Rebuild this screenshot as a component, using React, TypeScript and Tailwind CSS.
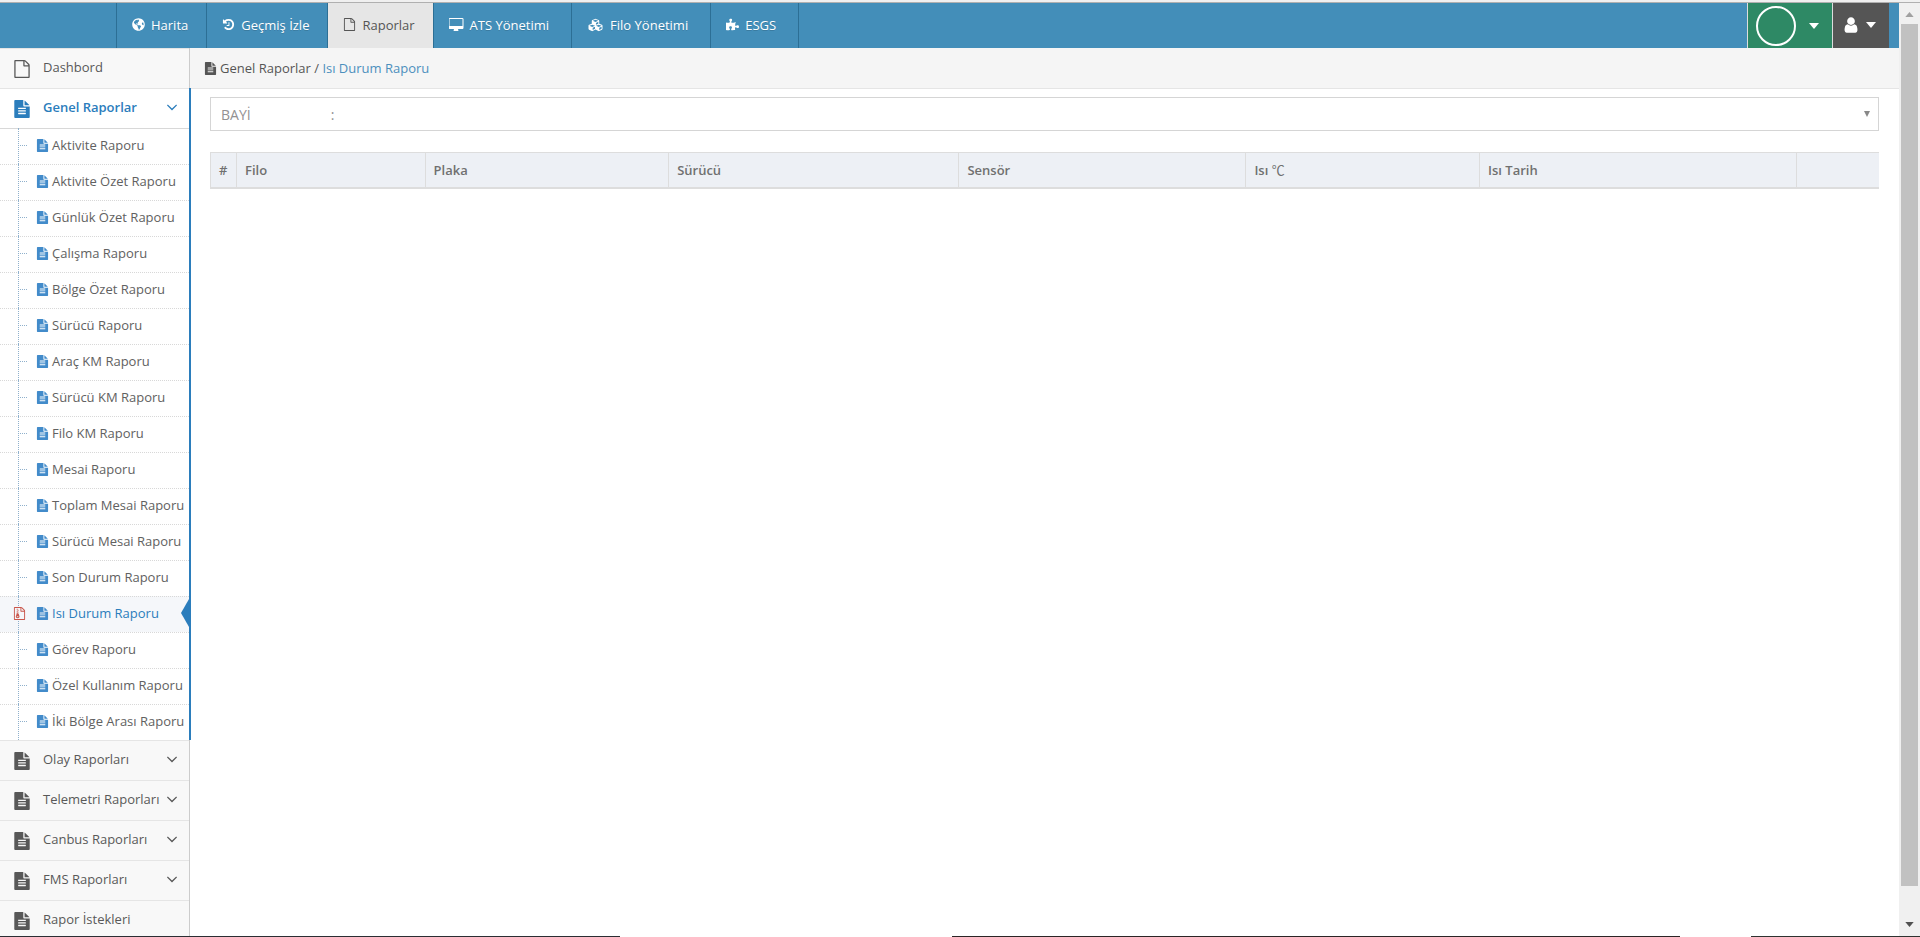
import { FaCubes, FaGlobeAmericas, FaPuzzlePiece } from "react-icons/fa";
import clsx from "clsx";
import type { ReactNode } from "react";

type IconProps = { className?: string };

const Glyph = ({ d, className, wide }: IconProps & { d: string; wide?: boolean }) => (
  <svg viewBox={wide ? "0 0 1920 1792" : "0 0 1792 1792"} className={clsx("shrink-0 fill-current", className)} aria-hidden="true">
    <path d={d} />
  </svg>
);

const FileText = ({ className }: IconProps) => (
  <Glyph
    className={className}
    d="M1596 476q14 14 28 36h-472v-472q22 14 36 28zm-476 164h544v1056q0 40-28 68t-68 28h-1344q-40 0-68-28t-28-68v-1600q0-40 28-68t68-28h800v544q0 40 28 68t68 28zm160 736v-64q0-14-9-23t-23-9h-704q-14 0-23 9t-9 23v64q0 14 9 23t23 9h704q14 0 23-9t9-23zm0-256v-64q0-14-9-23t-23-9h-704q-14 0-23 9t-9 23v64q0 14 9 23t23 9h704q14 0 23-9t9-23zm0-256v-64q0-14-9-23t-23-9h-704q-14 0-23 9t-9 23v64q0 14 9 23t23 9h704q14 0 23-9t9-23z"
  />
);

const FileOutline = ({ className }: IconProps) => (
  <Glyph
    className={className}
    d="M1596 380q28 28 48 76t20 88v1152q0 40-28 68t-68 28h-1344q-40 0-68-28t-28-68v-1600q0-40 28-68t68-28h896q40 0 88 20t76 48zm-444-244v376h376q-10-29-22-41l-313-313q-12-12-41-22zm384 1528v-1024h-416q-40 0-68-28t-28-68v-416h-768v1536h1280z"
  />
);

const FileArchive = ({ className }: IconProps) => (
  <Glyph
    className={className}
    d="M1596 380q28 28 48 76t20 88v1152q0 40-28 68t-68 28h-1344q-40 0-68-28t-28-68v-1600q0-40 28-68t68-28h896q40 0 88 20t76 48zm-444-244v376h376q-10-29-22-41l-313-313q-12-12-41-22zm384 1528v-1024h-416q-40 0-68-28t-28-68v-416h-768v1536h1280zM640 384v-128h-128v128h128zm128 128v-128h-128v128h128zm-128 128v-128h-128v128h128zm128 128v-128h-128v128h128zM781 943l107 349q8 27 8 52 0 83-72.5 137.5t-183.5 54.5-183.5-54.5-72.5-137.5q0-25 8-52 21-63 120-396v-128h128v128h79q22 0 39 13t23 34zm-141 465q53 0 90.5-19t37.5-45-37.5-45-90.5-19-90.5 19-37.5 45 37.5 45 90.5 19z"
  />
);

const History = ({ className }: IconProps) => (
  <Glyph
    className={className}
    d="M1664 896q0 156-61 298t-164 245-245 164-298 61q-172 0-327-72.5t-264-204.5q-7-10-6.5-22.5t8.5-20.5l137-138q10-9 25-9 16 2 23 12 73 95 179 147t225 52q104 0 198.5-40.5t163.5-109.5 109.5-163.5 40.5-198.5-40.5-198.5-109.5-163.5-163.5-109.5-198.5-40.5q-98 0-188 35.5t-160 101.5l137 138q31 30 14 69-17 40-59 40h-448q-26 0-45-19t-19-45v-448q0-42 40-59 39-17 69 14l130 129q107-101 244.5-156.5t284.5-55.5q156 0 298 61t245 164 164 245 61 298zm-640-288v448q0 14-9 23t-23 9h-320q-14 0-23-9t-9-23v-64q0-14 9-23t23-9h224v-352q0-14 9-23t23-9h64q14 0 23 9t9 23z"
  />
);

const Desktop = ({ className }: IconProps) => (
  <Glyph
    wide
    className={className}
    d="M1728 992v-832q0-13-9.5-22.5t-22.5-9.5h-1600q-13 0-22.5 9.5t-9.5 22.5v832q0 13 9.5 22.5t22.5 9.5h1600q13 0 22.5-9.5t9.5-22.5zm128-832v1088q0 66-47 113t-113 47h-544q0 37 16 77.5t32 71 16 43.5q0 26-19 45t-45 19h-512q-26 0-45-19t-19-45q0-14 16-44t32-70 16-78h-544q-66 0-113-47t-47-113v-1088q0-66 47-113t113-47h1600q66 0 113 47t47 113z"
  />
);

const User = ({ className }: IconProps) => (
  <Glyph
    className={className}
    d="M1536 1399q0 109-62.5 187t-150.5 78h-854q-88 0-150.5-78t-62.5-187q0-85 8.5-160.5t31.5-152 58.5-131 94-89 134.5-34.5q131 128 313 128t313-128q76 0 134.5 34.5t94 89 58.5 131 31.5 152 8.5 160.5zm-256-887q0 159-112.5 271.5t-271.5 112.5-271.5-112.5-112.5-271.5 112.5-271.5 271.5-112.5 271.5 112.5 112.5 271.5z"
  />
);

const AngleDown = ({ className }: IconProps) => (
  <Glyph
    className={className}
    d="M1395 736q0 13-10 23l-466 466q-10 10-23 10t-23-10l-466-466q-10-10-10-23t10-23l50-50q10-10 23-10t23 10l393 393 393-393q10-10 23-10t23 10l50 50q10 10 10 23z"
  />
);

const Caret = ({ className }: IconProps) => (
  <svg viewBox="0 0 10 6" className={clsx("shrink-0 fill-current", className)} aria-hidden="true">
    <path d="M0 0h10L5 6z" />
  </svg>
);

const navItems: { label: string; icon: ReactNode; active?: boolean; wide?: boolean }[] = [
  { label: "Harita", icon: <FaGlobeAmericas className="size-[13px]" /> },
  { label: "Geçmiş İzle", icon: <History className="size-[13px]" /> },
  { label: "Raporlar", icon: <FileOutline className="size-[13px]" />, active: true },
  { label: "ATS Yönetimi", icon: <Desktop className="h-[14px] w-[15px]" />, wide: true },
  { label: "Filo Yönetimi", icon: <FaCubes className="h-[14px] w-[17px]" />, wide: true },
  { label: "ESGS", icon: <FaPuzzlePiece className="size-[13px]" />, wide: true },
];

const reports = [
  "Aktivite Raporu",
  "Aktivite Özet Raporu",
  "Günlük Özet Raporu",
  "Çalışma Raporu",
  "Bölge Özet Raporu",
  "Sürücü Raporu",
  "Araç KM Raporu",
  "Sürücü KM Raporu",
  "Filo KM Raporu",
  "Mesai Raporu",
  "Toplam Mesai Raporu",
  "Sürücü Mesai Raporu",
  "Son Durum Raporu",
  "Isı Durum Raporu",
  "Görev Raporu",
  "Özel Kullanım Raporu",
  "İki Bölge Arası Raporu",
];
const activeReport = "Isı Durum Raporu";

const columns: { id: string; label: ReactNode; width: string }[] = [
  { id: "no", label: "#", width: "w-[26px]" },
  { id: "filo", label: "Filo", width: "w-[11.3%]" },
  { id: "plaka", label: "Plaka", width: "w-[14.6%]" },
  { id: "surucu", label: "Sürücü", width: "w-[17.4%]" },
  { id: "sensor", label: "Sensör", width: "w-[17.2%]" },
  {
    id: "isi",
    label: (
      <>
        Isı <span className="font-['Noto_Sans_CJK_SC',sans-serif] font-normal">℃</span>
      </>
    ),
    width: "w-[14%]",
  },
  { id: "tarih", label: "Isı Tarih", width: "w-[19%]" },
  { id: "islem", label: "", width: "w-auto" },
];

const TopBar = () => (
  <header className="flex h-[45px] shrink-0 bg-[#438eb9] text-white">
    <nav className="ml-[116px] flex border-l border-[#2c6f95]">
      {navItems.map((item) => (
        <a
          key={item.label}
          href="#"
          className={clsx(
            "flex items-center gap-[6px] border-r border-[#2c6f95] pb-[2px] pl-[15px]",
            item.wide ? "pr-[22px]" : "pr-[18px]",
            item.active ? "bg-[#e6e6e6] text-[#555]" : "text-shadow-2xs"
          )}
        >
          {item.icon}
          {item.label}
        </a>
      ))}
    </nav>
    <div className="mr-[10px] ml-auto flex">
      <button type="button" aria-label="Firma" className="flex w-[85px] items-center border-l border-[#ddd] bg-[#2e8965] pl-2">
        <span className="size-10 rounded-full border-2 border-white" />
        <Caret className="ml-[13px] h-[6px] w-[10px]" />
      </button>
      <button type="button" aria-label="Kullanıcı" className="flex w-[57px] items-center border-l border-[#ddd] bg-[#555] pb-[2px] pl-[9px]">
        <User className="size-[18px]" />
        <Caret className="ml-[6px] h-[6px] w-[10px]" />
      </button>
    </div>
  </header>
);

const MenuItem = ({ label, open, outline, arrow = true }: { label: string; open?: boolean; outline?: boolean; arrow?: boolean }) => (
  <a
    href="#"
    className={clsx(
      "flex h-10 items-center border-t border-[#e5e5e5] pr-[8px] pb-[4px] pl-[13px]",
      open ? "bg-white font-semibold text-[#2b7dbc]" : "text-[#585858]"
    )}
  >
    {outline ? <FileOutline className="mt-[4px] size-[18px]" /> : <FileText className="mt-[4px] size-[18px]" />}
    <span className="ml-3 whitespace-nowrap">{label}</span>
    {arrow && <AngleDown className="ml-auto size-[18px]" />}
  </a>
);

const ReportLink = ({ label }: { label: string }) => {
  const active = label === activeReport;
  return (
    <li className="group relative">
      <a
        href="#"
        className={clsx(
          "flex h-9 items-center gap-[3px] border-t border-dotted border-[#d8d8d8] pb-[3px] pl-9 whitespace-nowrap group-first:border-solid",
          active ? "bg-[#f5f7fa] text-[#2b7dbc]" : "text-[#616161]"
        )}
      >
        <FileText className="size-[13px] text-[#428bca]" />
        {label}
      </a>
      <span className="absolute top-0 left-[18px] h-full border-l border-dotted border-[#8fb0cc]" />
      {active ? (
        <>
          <FileArchive className="absolute top-[11px] left-[13px] size-[13px] bg-[#f5f7fa] text-[#c9564b]" />
          <svg viewBox="0 0 8 28" className="absolute top-[3px] right-0 h-7 w-2 fill-[#2b7dbc]" aria-hidden="true">
            <path d="M8 0v28L0 14z" />
          </svg>
        </>
      ) : (
        <span className="absolute top-[17px] left-5 w-[7px] border-t border-dotted border-[#8fb0cc]" />
      )}
    </li>
  );
};

const Sidebar = () => (
  <aside className="relative w-[190px] shrink-0 border-r border-[#ccc] bg-[#f8f8f8]">
    <MenuItem label="Dashbord" outline arrow={false} />
    <div className="relative">
      <MenuItem label="Genel Raporlar" open />
      <ul className="bg-white">
        {reports.map((label) => (
          <ReportLink key={label} label={label} />
        ))}
      </ul>
      <span className="absolute inset-y-0 -right-[2px] w-[2px] bg-[#2b7dbc]" />
    </div>
    <MenuItem label="Olay Raporları" />
    <MenuItem label="Telemetri Raporları" />
    <MenuItem label="Canbus Raporları" />
    <MenuItem label="FMS Raporları" />
    <MenuItem label="Rapor İstekleri" arrow={false} />
  </aside>
);

const Scrollbar = () => (
  <div className="flex w-[21px] shrink-0 flex-col items-center bg-[#f0f0f0]" aria-hidden="true">
    <Caret className="mt-[9px] mb-[7px] h-[5px] w-[9px] rotate-180 text-[#a0a0a0]" />
    <div className="w-[17px] grow bg-[#c1c1c1]" />
    <Caret className="mt-9 mb-[9px] h-[5px] w-[9px] text-[#505050]" />
  </div>
);

const Main = () => (
  <main className="min-w-0 grow bg-white">
    <div className="flex h-[41px] items-center border-b border-[#e5e5e5] bg-[#f5f5f5] pl-[14px] text-[#555]">
      <FileText className="size-[13px]" />
      <span className="ml-[3px]">
        Genel Raporlar /{" "}
        <a href="#" className="text-[#4c8fbd]">
          Isı Durum Raporu
        </a>
      </span>
    </div>
    <div className="px-5 pt-2">
      <div className="relative">
        <select
          aria-label="Bayi"
          className="block h-[34px] w-full appearance-none border border-[#d5d5d5] bg-white pt-[2px] pl-[10px] text-sm text-[#939192]"
        >
          <option>{"BAYİ" + "\u00a0".repeat(22) + ":"}</option>
        </select>
        <svg viewBox="0 0 6 6" className="pointer-events-none absolute top-[14px] right-[9px] size-[6px] fill-[#888]" aria-hidden="true">
          <path d="M0 0h6L3 6z" />
        </svg>
      </div>
      <table className="mt-[21px] w-full table-fixed border-collapse text-left text-[#707070]">
        <thead>
          <tr className="h-[35px] border-t border-b-2 border-[#ddd] bg-[#edf0f5]">
            {columns.map((col) => (
              <th key={col.id} className={clsx("border-l border-[#ddd] px-2 font-semibold", col.width)}>
                {col.label}
              </th>
            ))}
          </tr>
        </thead>
        <tbody />
      </table>
    </div>
  </main>
);

const App = () => (
  <div className="flex h-screen flex-col overflow-hidden bg-white font-['Open_Sans','Liberation_Sans',sans-serif] text-[13px] leading-5">
    <div className="h-[3px] shrink-0 border-b border-[#b0b0b0] bg-[#f0f0f0]" />
    <div className="flex min-h-0 grow">
      <div className="flex min-w-0 grow flex-col">
        <TopBar />
        <div className="flex min-h-0 grow overflow-hidden">
          <Sidebar />
          <Main />
        </div>
      </div>
      <Scrollbar />
    </div>
    <div className="flex h-px shrink-0 bg-white">
      <span className="w-[32.3%] bg-[#2b2e33]" />
      <span className="ml-[17.3%] w-[37.9%] bg-[#2b2526]" />
      <span className="ml-auto w-[8.8%] bg-[#2e3331]" />
    </div>
  </div>
);

export default App;
